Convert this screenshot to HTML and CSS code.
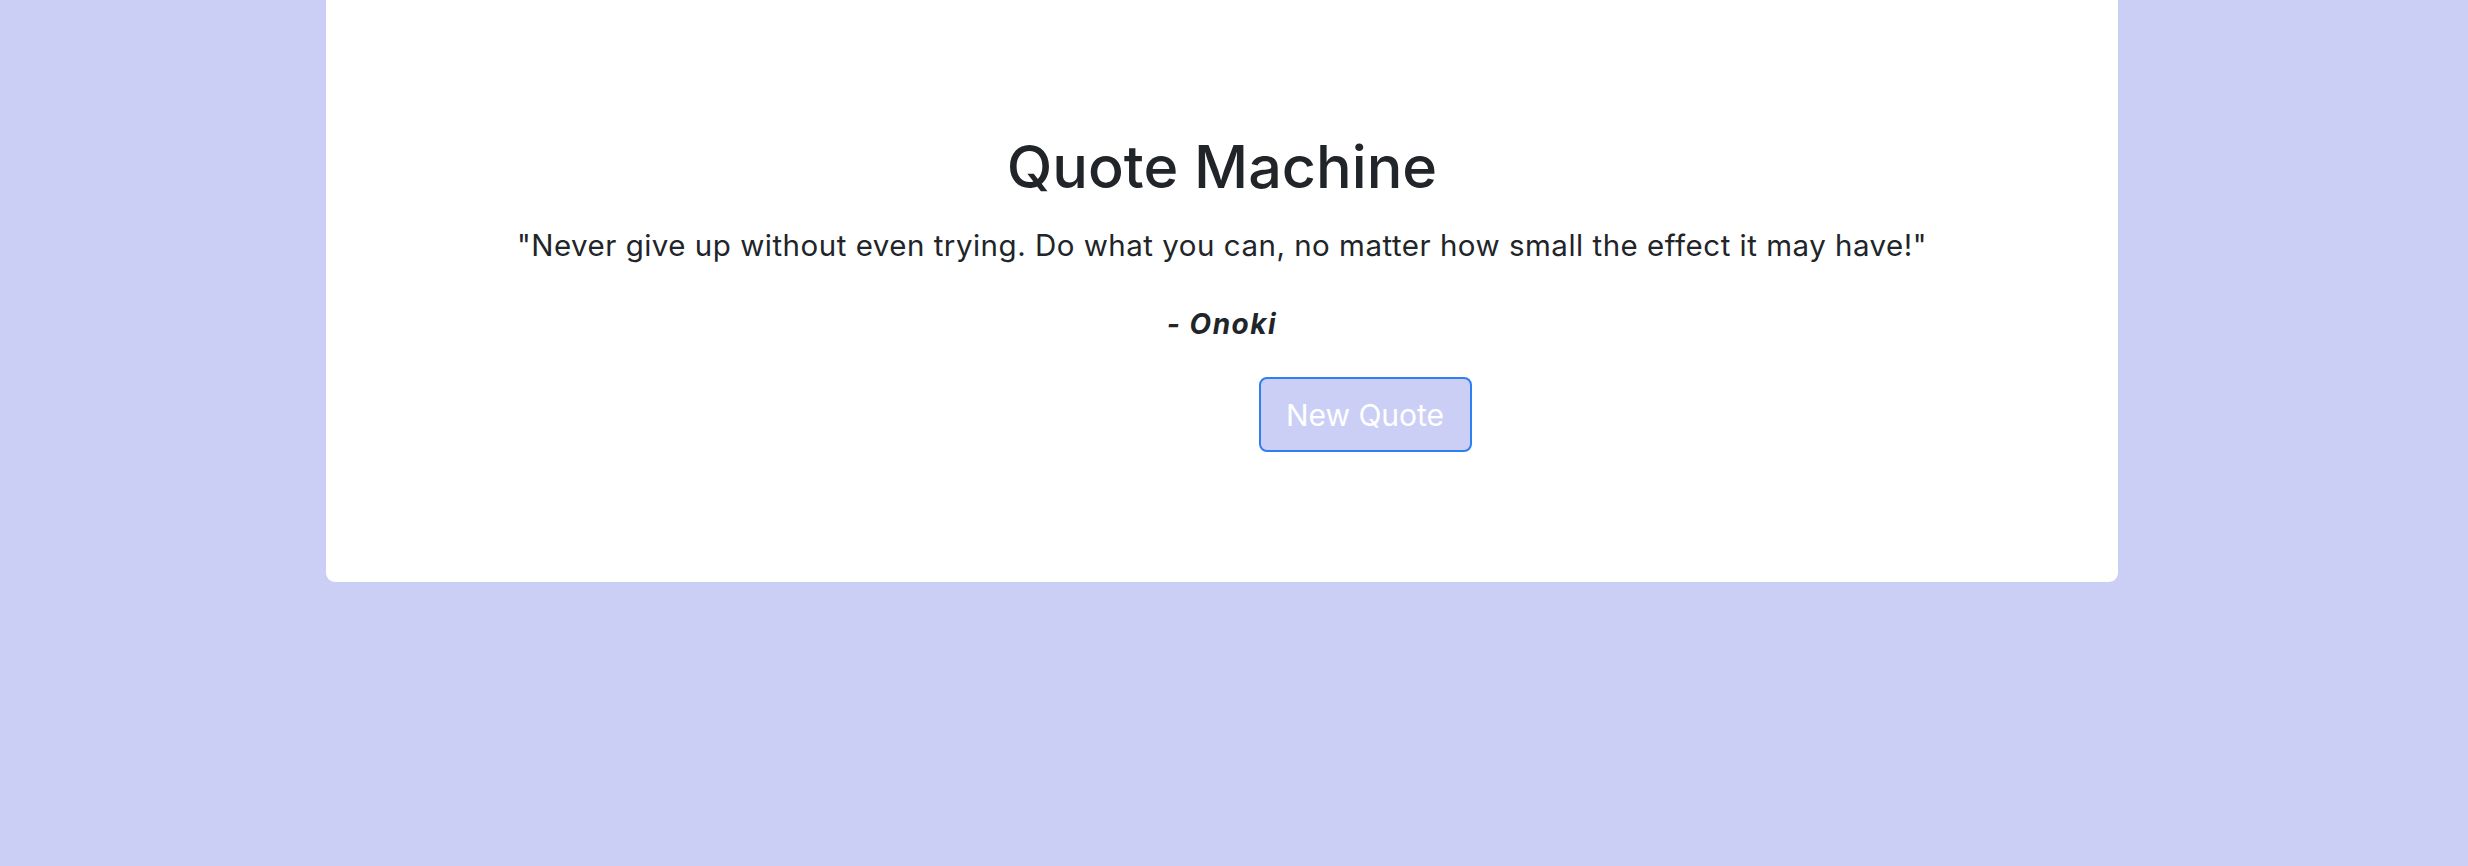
FILE: index.html
```html
<!DOCTYPE html>
<html lang="en">
<head>
<meta charset="utf-8">
<title>Quote Machine</title>
<link rel="stylesheet" href="styles.css">
</head>
<body>
<main class="page">
  <section class="card">
    <h1 class="title">Quote Machine</h1>
    <p class="quote">"Never give up without even trying. Do what you can, no matter how small the effect it may have!"</p>
    <p class="author">- Onoki</p>
    <button class="btn">New Quote</button>
  </section>
</main>
</body>
</html>
```

FILE: styles.css
```css
html, body {
  margin: 0;
  padding: 0;
}
body {
  background: #cbcff6;
  font-family: Inter, "Liberation Sans", sans-serif;
  color: #212529;
  width: 2468px;
  height: 866px;
  overflow: hidden;
}
.page {
  display: flex;
  padding-left: 326px;
}
.card {
  width: 1792px;
  height: 582px;
  box-sizing: border-box;
  background: #ffffff;
  border-radius: 0 0 9px 9px;
  display: flex;
  flex-direction: column;
  align-items: center;
  padding-top: 131px;
}
.title {
  margin: 0;
  font-size: 59.3px;
  font-weight: 500;
  line-height: 1.2;
}
.quote {
  margin: 21px 0 0 0;
  font-size: 29.5px;
  letter-spacing: 0.5px;
  line-height: 1.5;
}
.author {
  margin: 36px 0 0 0;
  font-size: 28px;
  font-weight: 700;
  font-style: italic;
  letter-spacing: 1.5px;
  line-height: 1.5;
}
.btn {
  margin: 32px 0 0 286px;
  width: 213px;
  height: 75px;
  box-sizing: border-box;
  background: #cbcff6;
  border: 2px solid #2f7ff0;
  border-radius: 8px;
  color: #ffffff;
  font-family: Inter, "Liberation Sans", sans-serif;
  font-size: 30px;
  padding: 0;
}
```
